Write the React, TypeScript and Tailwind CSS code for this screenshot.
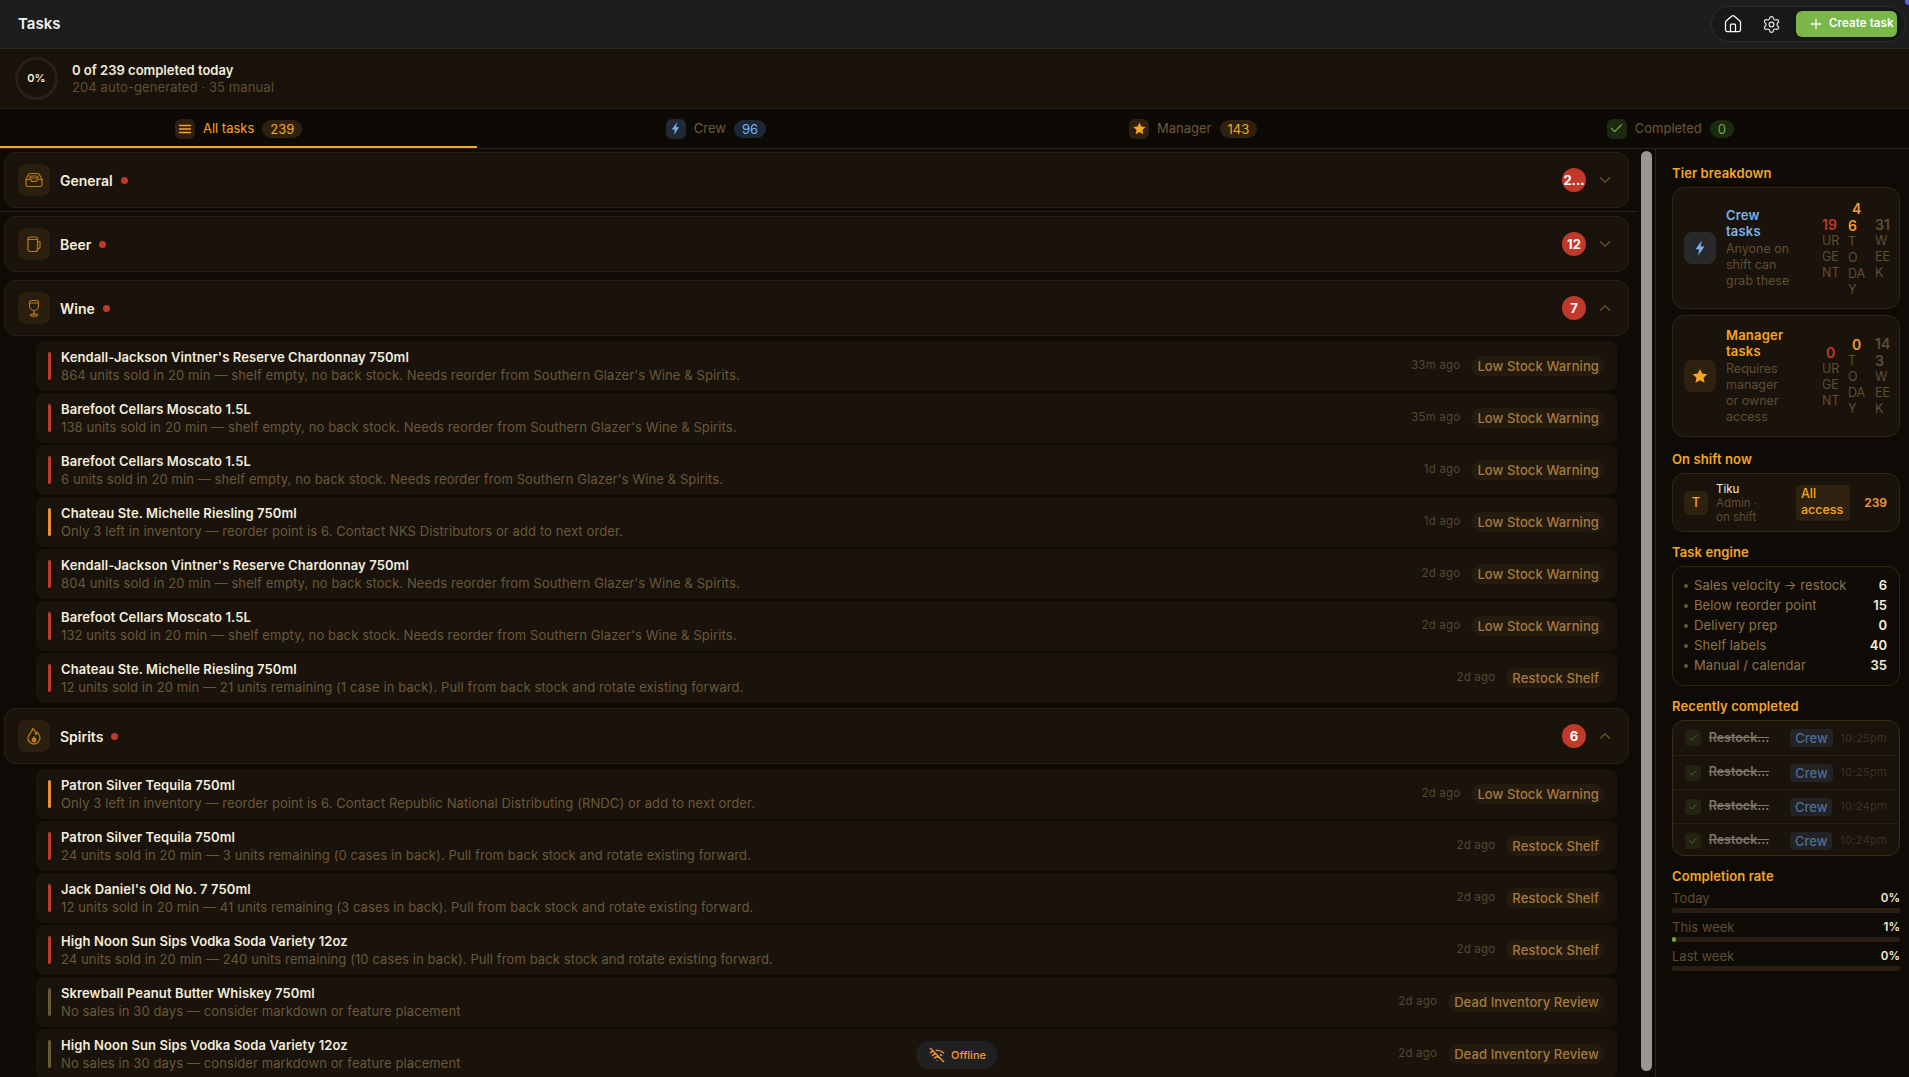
import React from "react";
import { ChevronDown, ChevronUp, Check, Plus, Settings, House, WifiOff } from "lucide-react";

const Bolt = ({ c = 16, color = "#7ab3e8" }: { c?: number; color?: string }) => (
  <svg width={c} height={c} viewBox="0 0 24 24" fill={color}><path d="M14.5 2 6 13.5h5L9.5 22 18 10h-5.2z" /></svg>
);
const Star = ({ c = 16, color = "#f5a623" }: { c?: number; color?: string }) => (
  <svg width={c} height={c} viewBox="0 0 24 24" fill={color}><path d="m12 2.5 2.9 6.3 6.9.8-5.1 4.7 1.4 6.8-6.1-3.4-6.1 3.4 1.4-6.8-5.1-4.7 6.9-.8z" /></svg>
);
const MenuLines = () => (
  <svg width="14" height="14" viewBox="0 0 14 14" stroke="#f5a623" strokeWidth="1.4" strokeLinecap="round"><path d="M1.5 3.5h11M1.5 7h11M1.5 10.5h11" /></svg>
);
const TrayIcon = () => (
  <svg width="20" height="20" viewBox="0 0 20 20" fill="none" stroke="#b87a18" strokeWidth="1.2" strokeLinejoin="round" strokeLinecap="round">
    <path d="M2 9.5 4.6 4.6A2 2 0 0 1 6.4 3.5h7.2a2 2 0 0 1 1.8 1.1L18 9.5v5.2a1.8 1.8 0 0 1-1.8 1.8H3.8A1.8 1.8 0 0 1 2 14.700z" />
    <path d="M2 9.500h4.800l.7 1.800h5l.7-1.800H18" />
    <path d="M6.700 6h6.600l.9 2h-8.400z" />
  </svg>
);
const MugIcon = () => (
  <svg width="20" height="20" viewBox="0 0 20 20" fill="none" stroke="#b87a18" strokeWidth="1.2" strokeLinejoin="round" strokeLinecap="round">
    <path d="M4 5a2 2 0 0 1 2-2h5.500a2 2 0 0 1 2 2v10.500a2 2 0 0 1-2 2H6a2 2 0 0 1-2-2z" />
    <path d="M4 5.500h9.500" />
    <path d="M13.500 7.500h2.500v6l-2.500 2" />
  </svg>
);
const WineIcon = () => (
  <svg width="20" height="20" viewBox="0 0 20 20" fill="none" stroke="#b87a18" strokeWidth="1.2" strokeLinejoin="round" strokeLinecap="round">
    <path d="M5.500 4.500A2 2 0 0 1 7.500 2.500h5a2 2 0 0 1 2 2v3.500a4.500 4.500 0 0 1-9 0z" />
    <path d="M5.500 5h9" />
    <path d="M10 12.500v3.500" />
    <ellipse cx="10" cy="17" rx="3.500" ry="1.200" />
  </svg>
);
const FlameIcon = () => (
  <svg width="20" height="20" viewBox="0 0 20 20" fill="none" stroke="#b87a18" strokeWidth="1.3" strokeLinejoin="round" strokeLinecap="round">
    <path d="M8.500 2.500c.2 2-1 3.200-2.300 4.700C5 8.600 4 10 4 12a6 6 0 0 0 6 6 6 6 0 0 0 6-6.200c0-2.800-1.500-4.600-3-5.900-.1 1.300-.6 2.100-1.500 2.600C11.800 6 10.600 3.700 8.500 2.500z" />
    <path d="M10 16.500a2.500 2.500 0 0 1-2.500-2.500c0-1.700 1.700-2.400 2.300-4 1.200 1 2.700 2.400 2.700 4a2.500 2.500 0 0 1-2.500 2.500z" fill="#b87a18" stroke="none" />
  </svg>
);

type RowData = { t: string; s: string; age: string; tag: string; bar: string };
const RED = "bg-[#c0392b]";
const ORANGE = "bg-[#f08c2e]";
const BROWN = "bg-[#6b5836]";

const wine: RowData[] = [
  { t: "Kendall-Jackson Vintner's Reserve Chardonnay 750ml", s: "864 units sold in 20 min — shelf empty, no back stock. Needs reorder from Southern Glazer's Wine & Spirits.", age: "33m ago", tag: "Low Stock Warning", bar: RED },
  { t: "Barefoot Cellars Moscato 1.5L", s: "138 units sold in 20 min — shelf empty, no back stock. Needs reorder from Southern Glazer's Wine & Spirits.", age: "35m ago", tag: "Low Stock Warning", bar: RED },
  { t: "Barefoot Cellars Moscato 1.5L", s: "6 units sold in 20 min — shelf empty, no back stock. Needs reorder from Southern Glazer's Wine & Spirits.", age: "1d ago", tag: "Low Stock Warning", bar: RED },
  { t: "Chateau Ste. Michelle Riesling 750ml", s: "Only 3 left in inventory — reorder point is 6. Contact NKS Distributors or add to next order.", age: "1d ago", tag: "Low Stock Warning", bar: ORANGE },
  { t: "Kendall-Jackson Vintner's Reserve Chardonnay 750ml", s: "804 units sold in 20 min — shelf empty, no back stock. Needs reorder from Southern Glazer's Wine & Spirits.", age: "2d ago", tag: "Low Stock Warning", bar: RED },
  { t: "Barefoot Cellars Moscato 1.5L", s: "132 units sold in 20 min — shelf empty, no back stock. Needs reorder from Southern Glazer's Wine & Spirits.", age: "2d ago", tag: "Low Stock Warning", bar: RED },
  { t: "Chateau Ste. Michelle Riesling 750ml", s: "12 units sold in 20 min — 21 units remaining (1 case in back). Pull from back stock and rotate existing forward.", age: "2d ago", tag: "Restock Shelf", bar: RED },
];
const spirits: RowData[] = [
  { t: "Patron Silver Tequila 750ml", s: "Only 3 left in inventory — reorder point is 6. Contact Republic National Distributing (RNDC) or add to next order.", age: "2d ago", tag: "Low Stock Warning", bar: ORANGE },
  { t: "Patron Silver Tequila 750ml", s: "24 units sold in 20 min — 3 units remaining (0 cases in back). Pull from back stock and rotate existing forward.", age: "2d ago", tag: "Restock Shelf", bar: RED },
  { t: "Jack Daniel's Old No. 7 750ml", s: "12 units sold in 20 min — 41 units remaining (3 cases in back). Pull from back stock and rotate existing forward.", age: "2d ago", tag: "Restock Shelf", bar: RED },
  { t: "High Noon Sun Sips Vodka Soda Variety 12oz", s: "24 units sold in 20 min — 240 units remaining (10 cases in back). Pull from back stock and rotate existing forward.", age: "2d ago", tag: "Restock Shelf", bar: RED },
  { t: "Skrewball Peanut Butter Whiskey 750ml", s: "No sales in 30 days — consider markdown or feature placement", age: "2d ago", tag: "Dead Inventory Review", bar: BROWN },
  { t: "High Noon Sun Sips Vodka Soda Variety 12oz", s: "No sales in 30 days — consider markdown or feature placement", age: "2d ago", tag: "Dead Inventory Review", bar: BROWN },
];

const Row = ({ r }: { r: RowData }) => (
  <div className="ml-9 mr-[21px] h-[50px] shrink-0 rounded-lg bg-[#19130b] flex items-center pl-3 pr-3">
    <div className={`w-[3px] h-7 rounded-full shrink-0 ${r.bar}`} />
    <div className="ml-[10px] flex-1 min-w-0">
      <div className="text-[13px] leading-4 font-semibold text-[#f4eddd] tracking-[0.1px] whitespace-nowrap">{r.t}</div>
      <div className="mt-[2px] text-[13px] leading-4 text-[#6b5838] tracking-[0.1px] whitespace-nowrap">{r.s}</div>
    </div>
    <div className="text-[11.5px] text-[#564730] mr-[11px] tracking-[0.2px] whitespace-nowrap">{r.age}</div>
    <div className="h-5 px-[6px] rounded-full bg-[#241a0e] text-[13px] leading-5 font-medium text-[#a47a3f] tracking-[0.1px] whitespace-nowrap">{r.tag}</div>
  </div>
);

const Group = ({ name, icon, count, open, dotClass }: { name: string; icon: React.ReactNode; count: string; open?: boolean; dotClass?: string }) => (
  <div className="ml-1 mr-[9px] h-14 shrink-0 rounded-xl border border-[#2a2012] bg-[#19130b] flex items-center pl-[13px] pr-[13px]">
    <div className="w-8 h-8 rounded-lg bg-[#2a1e0f] flex items-center justify-center">{icon}</div>
    <div className="ml-[10px] text-[14px] font-semibold text-[#f6eedd]">{name}</div>
    <div className={`ml-2 w-[7px] h-[7px] rounded-full bg-[#c0392b] ${dotClass ?? ""}`} />
    <div className="flex-1" />
    <div className="w-6 h-6 rounded-full bg-[#c0392b] flex items-center justify-center text-[13px] font-bold text-white leading-none">{count}</div>
    <div className="ml-[9px] w-5 flex justify-center text-[#65512d]">
      {open ? <ChevronUp size={18} strokeWidth={1.75} /> : <ChevronDown size={18} strokeWidth={1.75} />}
    </div>
  </div>
);

const Tab = ({ icon, iconBg, label, count, badge, active }: { icon: React.ReactNode; iconBg: string; label: string; count: string; badge: string; active?: boolean }) => (
  <div className={`flex-1 relative flex items-center justify-center ${active ? "" : ""}`}>
    <div className={`w-5 h-5 rounded-md flex items-center justify-center ${iconBg}`}>{icon}</div>
    <div className={`ml-2 text-[13px] ${active ? "text-[#f5a623]" : "text-[#6b5838]"}`}>{label}</div>
    <div className={`ml-2 h-[18px] px-2 rounded-full text-[13px] leading-[18px] ${badge}`}>{count}</div>
    {active && <div className="absolute left-0 right-0 bottom-0 h-[2px] bg-[#f5a623]" />}
  </div>
);

const SectionLabel = ({ children, cls }: { children: React.ReactNode; cls: string }) => (
  <div className={`text-[13px] leading-4 font-semibold text-[#f5a623] tracking-[0.1px] ${cls}`}>{children}</div>
);

const Stat = ({ v, vc, label, w }: { v: React.ReactNode; vc: string; label: React.ReactNode; w: string }) => (
  <div className={`${w}`}>
    <div className={`text-[14px] leading-[17px] font-semibold ${vc}`}>{v}</div>
    <div className="text-[12.500px] leading-4 text-[#5f4e33]">{label}</div>
  </div>
);

const Recent = ({ time, first }: { time: string; first?: boolean }) => (
  <div className={`h-[34px] flex items-center pl-3 pr-3 ${first ? "" : "border-t border-[#2a2012]"}`}>
    <div className="w-4 h-4 rounded bg-[#222310] flex items-center justify-center"><Check size={10} className="text-[#4f7a30]" strokeWidth={2} /></div>
    <div className="ml-2 w-[83px] text-[12.500px] font-semibold text-[#7e7668] line-through whitespace-nowrap">Restock...</div>
    <div className="h-[18px] w-[43px] rounded bg-[#232224] text-center text-[13px] leading-[18px] font-medium text-[#4f6f95]">Crew</div>
    <div className="ml-2 text-[11px] text-[#3d3121] tracking-[0.3px] whitespace-nowrap">{time}</div>
  </div>
);

const Rate = ({ label, value, fill }: { label: string; value: string; fill?: boolean }) => (
  <div className="mb-[5px]">
    <div className="flex items-center justify-between h-[19px]">
      <span className="text-[13px] text-[#5f4e33]">{label}</span>
      <span className="text-[11.500px] font-semibold text-[#f4eddd]">{value}</span>
    </div>
    <div className="h-[5px] rounded-full bg-[#2a1e12]">
      {fill && <div className="h-full w-1 rounded-full bg-[#6fa83f]" />}
    </div>
  </div>
);

const Engine = ({ label, v }: { label: string; v: string }) => (
  <div className="h-5 flex items-center">
    <div className="w-1 h-1 rounded-full bg-[#6b5836]" />
    <div className="ml-[6px] flex-1 text-[13px] text-[#8f7448] tracking-[0.1px] whitespace-nowrap">{label}</div>
    <div className="text-[13px] font-semibold text-[#f4eddd]">{v}</div>
  </div>
);

export default function App() {
  return (
    <div className="w-[1909px] h-[1077px] overflow-hidden relative flex flex-col bg-[#0e0a06]" style={{ fontFamily: "Inter, 'Noto Sans', sans-serif" }}>
      <header className="h-[49px] shrink-0 bg-[#1c1d1f] border-b border-[#27282a] flex items-center pl-[18px] pr-[3px]">
        <div className="text-[15px] font-semibold text-[#f1f1f1]">Tasks</div>
        <div className="flex-1" />
        <div className="relative h-9 w-[195px] rounded-full bg-[#17181a] border border-[#2c2d30] flex items-center pl-[11px] pr-2">
          <House size={20} strokeWidth={1.5} className="text-white" />
          <Settings size={19} strokeWidth={1.5} className="ml-[19px] text-[#e8e8e8]" />
          <div className="ml-[15px] h-[26px] flex-1 rounded-md bg-[#7ab648] flex items-center pl-3 text-white">
            <Plus size={16} strokeWidth={2} />
            <span className="ml-[5px] text-[11.500px] font-semibold tracking-[0.1px]">Create task</span>
          </div>
        </div>
        <div className="absolute right-0 top-0 w-[4px] h-[5px] rounded-bl-full bg-[#5b5ff0]" />
      </header>

      <div className="h-[60px] shrink-0 bg-[#18120a] border-b border-[#2a2217] flex items-center pl-[15px]">
        <div className="w-[43px] h-[43px] rounded-full border-[3px] border-[#2a2015] flex items-center justify-center text-[11px] font-semibold text-[#f4eddd]">0%</div>
        <div className="ml-[14px]">
          <div className="text-[13px] leading-[17px] font-semibold text-[#f4eddd]">0 of 239 completed today</div>
          <div className="text-[13px] leading-[17px] text-[#5f4e33] tracking-[0.1px]">204 auto-generated · 35 manual</div>
        </div>
      </div>

      <div className="h-[40px] shrink-0 bg-[#0d0905] border-b border-[#2a2217] flex">
        <Tab active icon={<MenuLines />} iconBg="bg-[#2e2110]" label="All tasks" count="239" badge="bg-[#2e2110] text-[#f5a623]" />
        <Tab icon={<Bolt c={15} />} iconBg="bg-[#1f2a36]" label="Crew" count="96" badge="bg-[#1d2836] text-[#7ab3e8]" />
        <Tab icon={<Star c={15} />} iconBg="bg-[#2e2110]" label="Manager" count="143" badge="bg-[#2e2110] text-[#f5a623]" />
        <Tab icon={<Check size={15} strokeWidth={2} className="text-[#6fa83f]" />} iconBg="bg-[#1c2a12]" label="Completed" count="0" badge="bg-[#1c2a12] text-[#6fa83f]" />
      </div>

      <div className="flex-1 min-h-0 flex">
        <div className="w-[1638px] shrink-0 overflow-hidden flex flex-col pt-[3px]">
          <div className="pb-[3px] border-b border-[#2a2217] shrink-0"><Group name="General" icon={<TrayIcon />} count="2..." /></div>
          <div className="h-1 shrink-0" />
          <Group name="Beer" icon={<MugIcon />} count="12" />
          <div className="h-2 shrink-0" />
          <Group name="Wine" icon={<WineIcon />} count="7" open />
          <div className="flex flex-col gap-[2px] pt-[5px] pb-[5px] shrink-0">
            {wine.map((r, i) => <Row key={i} r={r} />)}
          </div>
          <Group name="Spirits" icon={<FlameIcon />} count="6" open />
          <div className="flex flex-col gap-[2px] pt-[5px] shrink-0">
            {spirits.map((r, i) => <Row key={i} r={r} />)}
          </div>
        </div>

        <div className="w-[17px] shrink-0 pt-[2px] pb-[6px] pl-[3px]">
          <div className="w-[11px] h-full rounded-full bg-[#979795]" />
        </div>

        <aside className="flex-1 min-w-0 border-l border-[#2a2217] pl-[16px] pr-[9px] pt-[16px]">
          <SectionLabel cls="">Tier breakdown</SectionLabel>
          <div className="mt-[6px] h-[122px] rounded-xl border border-[#33270f] bg-[#19130b] flex items-center pl-[11px]">
            <div className="w-8 h-8 shrink-0 rounded-lg bg-[#26282a] flex items-center justify-center"><Bolt c={18} /></div>
            <div className="ml-[10px] w-[90px] shrink-0">
              <div className="text-[13px] leading-4 font-semibold text-[#7ab3e8] tracking-[0.2px]">Crew<br />tasks</div>
              <div className="mt-[2px] text-[12.500px] leading-4 text-[#5f4e33]">Anyone on<br />shift can<br />grab these</div>
            </div>
            <div className="ml-[6px] flex items-center gap-[1px] pt-[1px]">
              <Stat w="w-[25px]" v="19" vc="text-[#c0392b]" label={<>UR<br />GE<br />NT</>} />
              <Stat w="w-[26px]" v={<span className="pl-1">4<br /><span>6</span></span>} vc="text-[#f59a33]" label={<>T<br />O<br />DA<br />Y</>} />
              <Stat w="w-[20px]" v="31" vc="font-normal text-[#5f4e33]" label={<>W<br />EE<br />K</>} />
            </div>
          </div>
          <div className="mt-[6px] h-[122px] rounded-xl border border-[#33270f] bg-[#19130b] flex items-center pl-[11px]">
            <div className="w-8 h-8 shrink-0 rounded-lg bg-[#2e2110] flex items-center justify-center"><Star c={18} /></div>
            <div className="ml-[10px] w-[90px] shrink-0">
              <div className="text-[13px] leading-4 font-semibold text-[#f5a623] tracking-[0.2px]">Manager<br />tasks</div>
              <div className="mt-[2px] text-[12.500px] leading-4 text-[#5f4e33]">Requires<br />manager<br />or owner<br />access</div>
            </div>
            <div className="ml-[6px] flex items-center gap-[1px]">
              <Stat w="w-[25px]" v={<span className="pl-1">0</span>} vc="text-[#c0392b]" label={<>UR<br />GE<br />NT</>} />
              <Stat w="w-[26px]" v={<span className="pl-1">0</span>} vc="text-[#f59a33]" label={<>T<br />O<br />DA<br />Y</>} />
              <Stat w="w-[20px]" v={<>14<br />3</>} vc="font-normal text-[#5f4e33]" label={<>W<br />EE<br />K</>} />
            </div>
          </div>

          <SectionLabel cls="mt-[14px]">On shift now</SectionLabel>
          <div className="mt-[6px] h-[59px] rounded-xl border border-[#33270f] bg-[#19130b] flex items-center pl-[11px] pr-[12px]">
            <div className="w-6 h-6 rounded-md bg-[#2e2110] flex items-center justify-center text-[13px] font-medium text-[#f5a623]">T</div>
            <div className="ml-2 w-[80px] shrink-0 text-[11.500px] leading-[14px]">
              <div className="text-[#f4eddd]">Tiku</div>
              <div className="text-[#5f4e33]">Admin ·<br />on shift</div>
            </div>
            <div className="w-[54px] h-9 shrink-0 rounded bg-[#2e2110] pl-[5px] pt-[1px] text-[12.500px] leading-4 font-medium text-[#f5a623]">All<br />access</div>
            <div className="flex-1 text-right text-[12px] font-semibold text-[#f59a33]">239</div>
          </div>

          <SectionLabel cls="mt-[12px]">Task engine</SectionLabel>
          <div className="mt-[6px] h-[120px] rounded-xl border border-[#33270f] bg-[#0f0b06] pl-[11px] pr-[12px] pt-[9px]">
            <Engine label="Sales velocity → restock" v="6" />
            <Engine label="Below reorder point" v="15" />
            <Engine label="Delivery prep" v="0" />
            <Engine label="Shelf labels" v="40" />
            <Engine label="Manual / calendar" v="35" />
          </div>

          <SectionLabel cls="mt-[12px]">Recently completed</SectionLabel>
          <div className="mt-[6px] h-[136px] rounded-xl border border-[#3a2b12] bg-[#19130b] overflow-hidden">
            <Recent first time="10:25pm" />
            <Recent time="10:25pm" />
            <Recent time="10:24pm" />
            <Recent time="10:24pm" />
          </div>

          <SectionLabel cls="mt-[12px]">Completion rate</SectionLabel>
          <div className="mt-[5px]">
            <Rate label="Today" value="0%" />
            <Rate label="This week" value="1%" fill />
            <Rate label="Last week" value="0%" />
          </div>
        </aside>
      </div>

      <div className="absolute left-[916px] top-[1041px] h-7 w-[81px] rounded-full bg-[#202020] flex items-center pl-[13px] text-[#f59a33]">
        <WifiOff size={16} strokeWidth={2} />
        <span className="ml-[6px] text-[11px] font-medium">Offline</span>
      </div>
    </div>
  );
}
